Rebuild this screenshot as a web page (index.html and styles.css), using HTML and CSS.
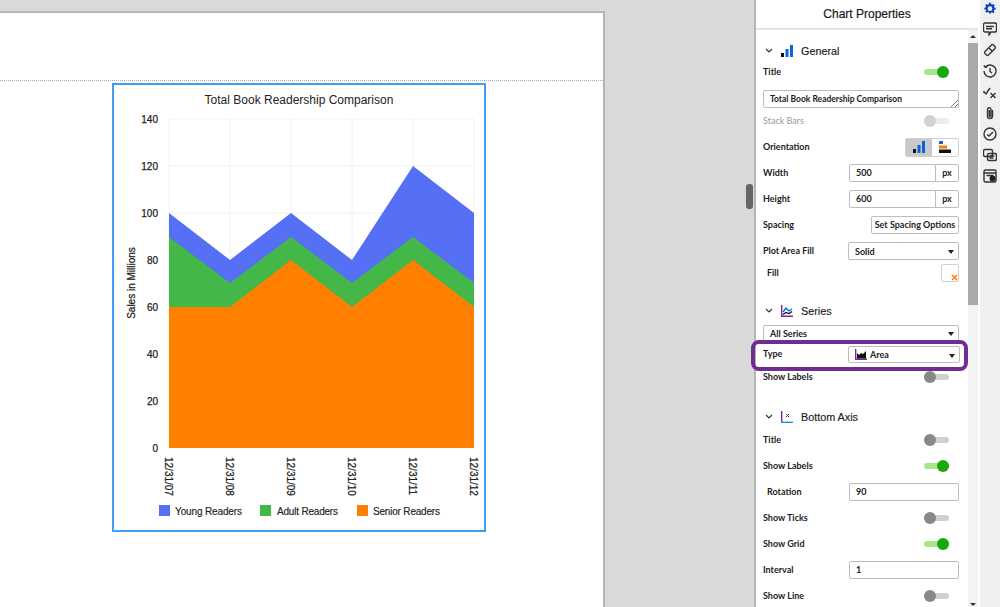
FILE: index.html
```html
<!DOCTYPE html>
<html lang="en">
<head>
    <meta charset="UTF-8">
    <title>Chart Properties</title>
    <link rel="stylesheet" href="styles.css">
</head>
<body>
    <div class="workspace">
        <div class="page">
            <div class="page-header"></div>
            <div class="chart-card">
                <svg class="chart" width="370" height="445" viewBox="0 0 370 445">
                    <text class="chart-title" x="185" y="19" text-anchor="middle">Total Book Readership Comparison</text>
                    <g class="grid">
                        <path d="M55 34H360M55 81H360M55 128H360M55 175H360M55 222H360M55 269H360M55 316H360"/>
                        <path d="M55 34V363M116 34V363M177 34V363M238 34V363M299 34V363M360 34V363"/>
                    </g>
                    <polygon fill="#5570f5" points="55,128 116,175 177,128 238,175 299,81 360,128 360,363 55,363"/>
                    <polygon fill="#44b749" points="55,152 116,198 177,152 238,198 299,152 360,198 360,363 55,363"/>
                    <polygon fill="#ff8000" points="55,222 116,222 177,175 238,222 299,175 360,222 360,363 55,363"/>
                    <g class="tick" text-anchor="end">
                        <text x="44" y="38">140</text>
                        <text x="44" y="85">120</text>
                        <text x="44" y="132">100</text>
                        <text x="44" y="179">80</text>
                        <text x="44" y="226">60</text>
                        <text x="44" y="273">40</text>
                        <text x="44" y="320">20</text>
                        <text x="44" y="367">0</text>
                    </g>
                    <text class="tick" transform="translate(21 198) rotate(-90)" text-anchor="middle">Sales in Millions</text>
                    <g class="tick">
                        <text transform="translate(51 372) rotate(90)">12/31/07</text>
                        <text transform="translate(112 372) rotate(90)">12/31/08</text>
                        <text transform="translate(173 372) rotate(90)">12/31/09</text>
                        <text transform="translate(234 372) rotate(90)">12/31/10</text>
                        <text transform="translate(295 372) rotate(90)">12/31/11</text>
                        <text transform="translate(356 372) rotate(90)">12/31/12</text>
                    </g>
                    <rect x="45" y="420" width="11" height="11" fill="#5570f5"/>
                    <text class="legend" x="61" y="430" textLength="67">Young Readers</text>
                    <rect x="146" y="420" width="11" height="11" fill="#44b749"/>
                    <text class="legend" x="163" y="430" textLength="61">Adult Readers</text>
                    <rect x="243" y="420" width="11" height="11" fill="#ff8000"/>
                    <text class="legend" x="259" y="430" textLength="67">Senior Readers</text>
                </svg>
            </div>
        </div>
        <div class="splitter"></div>
    </div>

    <div class="panel">
        <div class="panel-head">Chart Properties</div>
        <div class="panel-body">
            <div class="props">
                <div class="section-head">
                    <svg class="chevron" width="8" height="5" viewBox="0 0 8 5"><path d="M1 1l3 3 3-3"/></svg>
                    <svg class="section-icon" width="12" height="12" viewBox="0 0 12 12"><rect x="0" y="8" width="3" height="4" fill="#111"/><rect x="4.500" y="4" width="3" height="8" fill="#0a64d8"/><rect x="9" y="0" width="3" height="12" fill="#0a64d8"/></svg>
                    <span>General</span>
                </div>
                <div class="row row-short"><label>Title</label><span class="toggle on"></span></div>
                <div class="title-box">Total Book Readership Comparison
                    <svg class="grip" width="8" height="8" viewBox="0 0 8 8"><path d="M1 8L8 1M5 8L8 5"/></svg>
                </div>
                <div class="row"><label class="muted">Stack Bars</label><span class="toggle disabled"></span></div>
                <div class="row">
                    <label>Orientation</label>
                    <div class="btn-group">
                        <span class="btn-toggle active">
                            <svg width="12" height="12" viewBox="0 0 12 12"><rect x="0" y="8" width="3" height="4" fill="#111"/><rect x="4.500" y="4" width="3" height="8" fill="#0a64d8"/><rect x="9" y="0" width="3" height="12" fill="#0a64d8"/></svg>
                        </span>
                        <span class="btn-toggle">
                            <svg width="12" height="12" viewBox="0 0 12 12"><rect x="0" y="0" width="4" height="3" fill="#0a64d8"/><rect x="0" y="4.500" width="8" height="3" fill="#ff7a00"/><rect x="0" y="8.500" width="12" height="3.500" fill="#111"/></svg>
                        </span>
                    </div>
                </div>
                <div class="row">
                    <label>Width</label>
                    <div class="unit-input"><span class="value">500</span><span class="unit">px</span></div>
                </div>
                <div class="row">
                    <label>Height</label>
                    <div class="unit-input"><span class="value">600</span><span class="unit">px</span></div>
                </div>
                <div class="row"><label>Spacing</label><span class="button">Set Spacing Options</span></div>
                <div class="row">
                    <label>Plot Area Fill</label>
                    <div class="select">Solid<i class="caret"></i></div>
                </div>
                <div class="row row-fill">
                    <label class="indent">Fill</label>
                    <span class="swatch">
                        <svg width="7" height="7" viewBox="0 0 7 7"><path d="M1 1l5 5M6 1L1 6"/></svg>
                    </span>
                </div>

                <div class="section-head section-gap">
                    <svg class="chevron" width="8" height="5" viewBox="0 0 8 5"><path d="M1 1l3 3 3-3"/></svg>
                    <svg class="section-icon" width="12" height="12" viewBox="0 0 12 12"><path d="M.7 0v11.300H12" fill="none" stroke="#7a2a90" stroke-width="1.400"/><path d="M2 7l3-4 3 3 3-2" fill="none" stroke="#0a64d8" stroke-width="1.300"/><path d="M2 9.500l3-2 3 1 3-2" fill="none" stroke="#111" stroke-width="1.300"/></svg>
                    <span>Series</span>
                </div>
                <div class="row row-series">
                    <div class="select select-full">All Series<i class="caret"></i></div>
                </div>
                <div class="row row-type">
                    <label>Type</label>
                    <div class="select select-type">
                        <svg width="12" height="11" viewBox="0 0 12 11"><path d="M.7 0v10.300H12" fill="none" stroke="#7a2a90" stroke-width="1.400"/><path d="M2 9.500V4l2 2 2-2 2 1 3-3v7.500z" fill="#111"/></svg>
                        Area<i class="caret"></i>
                    </div>
                    <div class="highlight"></div>
                </div>
                <div class="row"><label>Show Labels</label><span class="toggle"></span></div>

                <div class="section-head section-gap2">
                    <svg class="chevron" width="8" height="5" viewBox="0 0 8 5"><path d="M1 1l3 3 3-3"/></svg>
                    <svg class="section-icon" width="12" height="12" viewBox="0 0 12 12"><path d="M.7 0v11" fill="none" stroke="#7a2a90" stroke-width="1.400"/><path d="M0 11.300H12" fill="none" stroke="#1e90e8" stroke-width="1.400"/><path d="M5 3l3 3M8 3L5 6" fill="none" stroke="#333"/></svg>
                    <span>Bottom Axis</span>
                </div>
                <div class="row"><label>Title</label><span class="toggle"></span></div>
                <div class="row"><label>Show Labels</label><span class="toggle on"></span></div>
                <div class="row">
                    <label class="indent">Rotation</label>
                    <div class="input">90</div>
                </div>
                <div class="row"><label>Show Ticks</label><span class="toggle"></span></div>
                <div class="row"><label>Show Grid</label><span class="toggle on"></span></div>
                <div class="row">
                    <label>Interval</label>
                    <div class="input">1</div>
                </div>
                <div class="row"><label>Show Line</label><span class="toggle"></span></div>
            </div>
            <div class="scrollbar">
                <i class="arrow-up"></i>
                <div class="thumb"></div>
                <i class="arrow-down"></i>
            </div>
        </div>
    </div>

    <div class="rail">
        <svg width="14" height="14" viewBox="-3 -4 30 30"><path fill="#0b3fc4" fill-rule="evenodd" d="M10 1h4l.6 3.200 2 .9L19.400 3.200l2.800 2.800-1.900 2.800.9 2L24 11.500v4l-3.200.2-.9 2 1.900 2.700-2.800 2.800-2.800-1.900-2 .9L14 24h-4l-.6-2.700-2-.9-2.800 1.900-2.800-2.800 1.900-2.700-.9-2L0 15.500v-4l2.800-.7.900-2L1.800 6l2.800-2.800 2.800 1.900 2-.9zM12 8.500a5 5 0 1 0 0 10 5 5 0 0 0 0-10z" transform="translate(0 -1)"/></svg>
        <svg width="14" height="14" viewBox="0 0 14 14"><path class="stroke" d="M2 1h10a1.500 1.500 0 0 1 1.500 1.500v6A1.500 1.500 0 0 1 12 10H8l-2 3V10H2A1.500 1.500 0 0 1 .5 8.500v-6A1.500 1.500 0 0 1 2 1z"/><path class="stroke" d="M3 4.500h8M3 6.800h6"/></svg>
        <svg width="14" height="14" viewBox="0 0 14 14"><path class="stroke" d="M2 8.500L8.500 2a1.500 1.500 0 0 1 2 0l1.500 1.500a1.500 1.500 0 0 1 0 2L5.500 12a1.500 1.500 0 0 1-2 0L2 10.500a1.500 1.500 0 0 1 0-2zM6 5l3 3"/></svg>
        <svg width="14" height="14" viewBox="0 0 14 14"><path class="stroke" d="M2.500 3A6 6 0 1 1 1 7M.8 1.500l1.500 2 2.200-.8M7 4v3.500l2 1.500"/></svg>
        <svg width="14" height="14" viewBox="0 0 14 14"><path class="stroke" d="M1 7l2 2 4-6M7.500 8l5 5M12.500 8l-5 5M0 7h2"/></svg>
        <svg width="14" height="14" viewBox="0 0 14 14"><path class="stroke" d="M9.500 4v6a2.500 2.500 0 0 1-5 0V3.500a1.700 1.700 0 0 1 3.400 0V9.500a.8.8 0 0 1-1.600 0V4"/></svg>
        <svg width="14" height="14" viewBox="0 0 14 14"><circle class="stroke" cx="7" cy="7" r="6"/><path class="stroke" d="M4 7.500l2 1.500 4-4"/></svg>
        <svg width="14" height="14" viewBox="0 0 14 14"><rect class="stroke" x=".5" y="1.500" width="9" height="7" rx="1.500"/><rect class="stroke" x="4.500" y="5.500" width="9" height="7" rx="1.500"/><path class="stroke" d="M6.500 8h5M6.500 10h4"/></svg>
        <svg width="14" height="14" viewBox="0 0 14 14"><rect class="stroke" x="1" y="1" width="12" height="12" rx="1.500"/><path class="stroke" d="M1 4h12M3.500 6.500h7"/><circle cx="9.500" cy="9.500" r="3" fill="#222"/></svg>
    </div>
</body>
</html>
```

FILE: styles.css
```css
body {
	margin: 0;
	width: 1000px;
	height: 607px;
	overflow: hidden;
	display: flex;
	background: #d9d9d9;
	font-family: Lato, "Liberation Sans", sans-serif;
	color: #222;
}

svg {
	display: block;
	flex: none;
}

.workspace {
	width: 754px;
	flex: none;
	position: relative;
	padding-top: 11px;
	box-sizing: border-box;
}

.page {
	width: 605px;
	height: 596px;
	box-sizing: border-box;
	background: white;
	border-top: 2px solid #b5b5b5;
	border-right: 2px solid #b5b5b5;
}

.page-header {
	height: 67px;
	border-bottom: 1px dotted #aaa;
}

.chart-card {
	width: 374px;
	height: 449px;
	box-sizing: border-box;
	margin: 2px 0 0 112px;
	border: 2px solid #3f9ff5;
}

.chart text {
	font-family: "Liberation Sans", sans-serif;
	fill: #222;
}

.chart .chart-title {
	font-size: 12px;
}

.chart .tick text,
.chart text.tick {
	font-size: 10px;
	stroke: #222;
	stroke-width: 0.25px;
}

.chart .legend {
	font-size: 10px;
	stroke: #222;
	stroke-width: 0.15px;
}

.grid path {
	fill: none;
	stroke: #f2f2f2;
}

.splitter {
	position: absolute;
	left: 746px;
	top: 184px;
	width: 7px;
	height: 25px;
	border-radius: 3px;
	background: #666;
}

.panel {
	width: 224px;
	flex: none;
	box-sizing: border-box;
	display: flex;
	flex-direction: column;
	background: white;
	border-left: 2px solid #b5b5b5;
}

.panel-head {
	height: 30px;
	flex: none;
	display: flex;
	align-items: center;
	justify-content: center;
	box-sizing: border-box;
	border-bottom: 2px solid #e4e4e4;
	font-family: "Liberation Sans", sans-serif;
	font-size: 12px;
	color: #1a1a1a;
	-webkit-text-stroke: 0.2px #1a1a1a;
}

.panel-body {
	flex: 1;
	display: flex;
	min-height: 0;
}

.props {
	width: 212px;
	flex: none;
	box-sizing: border-box;
	padding: 10px 9px 0 7px;
}

.section-head {
	height: 21px;
	display: flex;
	align-items: center;
	font-family: "Liberation Sans", sans-serif;
	font-size: 10.8px;
	color: #1a1a1a;
	-webkit-text-stroke: 0.15px #1a1a1a;
}

.section-gap {
	margin-top: 18px;
}

.section-gap2 {
	margin-top: 16px;
}

.chevron {
	margin-left: 2px;
	fill: none;
	stroke: #333;
	stroke-width: 1.2;
}

.section-icon {
	margin-left: 8px;
	margin-right: 8px;
}

.row {
	height: 26px;
	display: flex;
	align-items: center;
	justify-content: space-between;
	position: relative;
}

.row label {
	margin-bottom: 2px;
	font-size: 9px;
	font-weight: 700;
	color: #222;
}

.row label.muted {
	color: #999;
	font-weight: 400;
}

.row label.indent {
	margin-left: 4px;
}

.row-short {
	height: 22px;
}

.row-fill {
	height: 18px;
}

.row-series {
	height: 24px;
}

.row-type {
	height: 19px;
}

.toggle {
	width: 25px;
	height: 6px;
	margin-right: 10px;
	border-radius: 3px;
	background: #cfcfcf;
	position: relative;
}

.toggle::after {
	content: "";
	position: absolute;
	left: 0;
	top: -3px;
	width: 12px;
	height: 12px;
	border-radius: 50%;
	background: #888;
}

.toggle.on {
	background: #a6e68c;
}

.toggle.on::after {
	left: 13px;
	background: #1aa80c;
}

.toggle.disabled {
	background: #ececec;
}

.toggle.disabled::after {
	background: #d2d2d2;
}

.title-box {
	height: 18px;
	margin-top: 7px;
	box-sizing: border-box;
	border: 1px solid #bdbdbd;
	border-radius: 2px;
	padding-left: 6px;
	font-size: 8.5px;
	font-weight: 700;
	line-height: 16px;
	position: relative;
}

.grip {
	position: absolute;
	right: 0;
	bottom: 0;
	fill: none;
	stroke: #777;
}

.btn-group {
	display: flex;
	height: 17px;
	border: 1px solid #d0d0d0;
	border-radius: 2px;
}

.btn-toggle {
	width: 26px;
	display: flex;
	align-items: center;
	justify-content: center;
}

.btn-toggle.active {
	background: #c9c9c9;
}

.unit-input {
	width: 110px;
	height: 18px;
	box-sizing: border-box;
	display: flex;
	border: 1px solid #bdbdbd;
	border-radius: 2px;
	font-size: 9px;
	font-weight: 700;
	line-height: 16px;
}

.unit-input .value {
	flex: 1;
	padding-left: 6px;
}

.unit-input .unit {
	width: 22px;
	text-align: center;
	border-left: 1px solid #bdbdbd;
}

.input {
	width: 110px;
	height: 18px;
	box-sizing: border-box;
	border: 1px solid #bdbdbd;
	border-radius: 2px;
	padding-left: 6px;
	font-size: 9px;
	font-weight: 700;
	line-height: 16px;
}

.button {
	width: 88px;
	height: 18px;
	box-sizing: border-box;
	border: 1px solid #bdbdbd;
	border-radius: 2px;
	text-align: center;
	font-size: 9px;
	font-weight: 700;
	line-height: 16px;
}

.select {
	width: 111px;
	height: 18px;
	box-sizing: border-box;
	display: flex;
	align-items: center;
	gap: 3px;
	border: 1px solid #bdbdbd;
	border-radius: 2px;
	padding-left: 6px;
	font-size: 9px;
	font-weight: 700;
	position: relative;
}

.select-full {
	width: 100%;
	height: 16px;
}

.select-type {
	width: 112px;
	margin-right: -1px;
	height: 17px;
}

.caret {
	position: absolute;
	right: 4px;
	top: 50%;
	margin-top: -1px;
	border-left: 3px solid transparent;
	border-right: 3px solid transparent;
	border-top: 4px solid #222;
}

.swatch {
	width: 18px;
	height: 18px;
	box-sizing: border-box;
	border: 1px solid #d0d0d0;
	border-radius: 2px;
	display: flex;
	align-items: flex-end;
	justify-content: flex-end;
	fill: none;
	stroke: #ff7a00;
	stroke-width: 1.5;
}

.highlight {
	position: absolute;
	left: -12px;
	right: -9px;
	top: -5px;
	bottom: -7px;
	border: 4px solid #6f2c91;
	border-radius: 8px;
}

.scrollbar {
	width: 10px;
	flex: none;
	background: #f4f4f4;
	position: relative;
	padding-top: 13px;
}

.thumb {
	height: 262px;
	background: #a9a9a9;
}

.arrow-up,
.arrow-down {
	position: absolute;
	left: 2px;
	border-left: 3px solid transparent;
	border-right: 3px solid transparent;
}

.arrow-up {
	top: 5px;
	border-bottom: 3px solid #333;
}

.arrow-down {
	bottom: 1px;
	border-top: 3px solid #333;
}

.rail {
	flex: 1;
	display: flex;
	flex-direction: column;
	align-items: center;
	gap: 7px;
	padding-top: 1px;
	background: #f0f0f0;
	border-left: 2px solid white;
}

.stroke {
	fill: none;
	stroke: #333;
	stroke-width: 1.4;
}
```
